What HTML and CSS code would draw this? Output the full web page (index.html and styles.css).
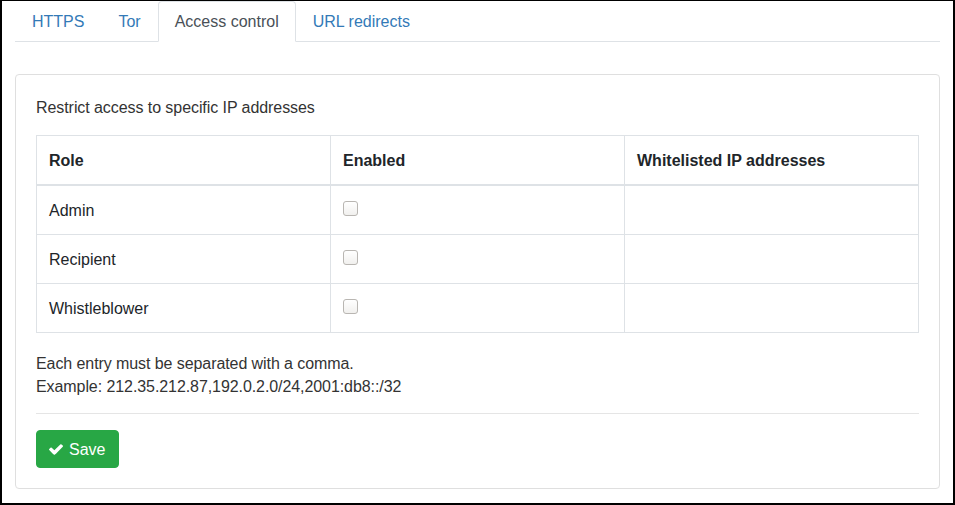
FILE: index.html
```html
<!DOCTYPE html>
<html>
<head>
<meta charset="utf-8">
<link rel="stylesheet" href="styles.css">
</head>
<body>
<div class="frame">
  <ul class="tabs">
    <li><a class="tab">HTTPS</a></li>
    <li><a class="tab">Tor</a></li>
    <li><a class="tab active">Access control</a></li>
    <li><a class="tab">URL redirects</a></li>
  </ul>
  <div class="card">
    <p class="lead">Restrict access to specific IP addresses</p>
    <table class="grid">
      <thead>
        <tr><th>Role</th><th>Enabled</th><th>Whitelisted IP addresses</th></tr>
      </thead>
      <tbody>
        <tr><td>Admin</td><td><input type="checkbox" class="chk"></td><td></td></tr>
        <tr><td>Recipient</td><td><input type="checkbox" class="chk"></td><td></td></tr>
        <tr><td>Whistleblower</td><td><input type="checkbox" class="chk"></td><td></td></tr>
      </tbody>
    </table>
    <div class="help">
      <div>Each entry must be separated with a comma.</div>
      <div>Example: 212.35.212.87,192.0.2.0/24,2001:db8::/32</div>
    </div>
    <hr class="rule">
    <button class="btn-save"><svg class="ico" viewBox="121 334 1550 1188" width="14" height="11"><path fill="#fff" d="M1671 566q0 40-28 68l-724 724-136 136q-28 28-68 28t-68-28l-136-136-362-362q-28-28-28-68t28-68l136-136q28-28 68-28t68 28l294 295 656-657q28-28 68-28t68 28l136 136q28 28 28 68z"/></svg>Save</button>
  </div>
</div>
</body>
</html>
```
FILE: styles.css
```css
html, body {
  margin: 0;
  padding: 0;
  background: #fff;
}
body {
  font-family: "Liberation Sans", Arial, Helvetica, sans-serif;
  font-size: 16px;
  line-height: 24px;
  color: #333;
}
.frame {
  box-sizing: border-box;
  width: 955px;
  height: 505px;
  border-style: solid;
  border-color: #000;
  border-width: 1px 2px 2px 2px;
  padding: 0 13px;
  overflow: hidden;
}
.tabs {
  list-style: none;
  margin: 0;
  padding: 0;
  display: flex;
  border-bottom: 1px solid #dee2e6;
}
.tabs li {
  margin-bottom: -1px;
}
.tab {
  display: block;
  padding: 8px 16px 7px;
  border: 1px solid transparent;
  border-top-left-radius: 4px;
  border-top-right-radius: 4px;
  color: #337ab7;
  cursor: pointer;
}
.tab.active {
  color: #495057;
  background: #fff;
  border-color: #dee2e6 #dee2e6 #fff;
}
.card {
  margin-top: 32px;
  border: 1px solid #dfdfdf;
  border-radius: 4px;
  padding: 21px 20px 20px;
}
.lead {
  margin: 0 0 15px;
  letter-spacing: -0.07px;
}
.grid {
  width: 100%;
  table-layout: fixed;
  border-collapse: collapse;
  border: 1px solid #dee2e6;
  color: #212529;
  margin-bottom: 0;
}
.grid th, .grid td {
  padding: 13px 12px 11px;
  border: 1px solid #dee2e6;
  text-align: left;
  vertical-align: top;
}
.grid th {
  font-weight: bold;
  border-bottom-width: 2px;
}
.chk {
  -webkit-appearance: none;
  appearance: none;
  display: block;
  box-sizing: border-box;
  margin: 2px 0 0 0;
  width: 15px;
  height: 15px;
  border: 1px solid #b9b6b2;
  border-radius: 3px;
  background: linear-gradient(#ffffff, #f1f0ee);
}
.help {
  margin-top: 19px;
  line-height: 23px;
  letter-spacing: -0.08px;
  color: #333;
}
.rule {
  margin: 15px 0 16px;
  border: 0;
  border-top: 1px solid #e5e5e5;
}
.btn-save {
  display: inline-flex;
  align-items: center;
  gap: 6px;
  font-family: inherit;
  font-size: 16px;
  line-height: 24px;
  padding: 7px 13px 5px 12px;
  color: #fff;
  background: #28a745;
  border: 1px solid #28a745;
  border-radius: 4px;
}
.ico {
  display: block;
  margin-top: -2px;
}
```
